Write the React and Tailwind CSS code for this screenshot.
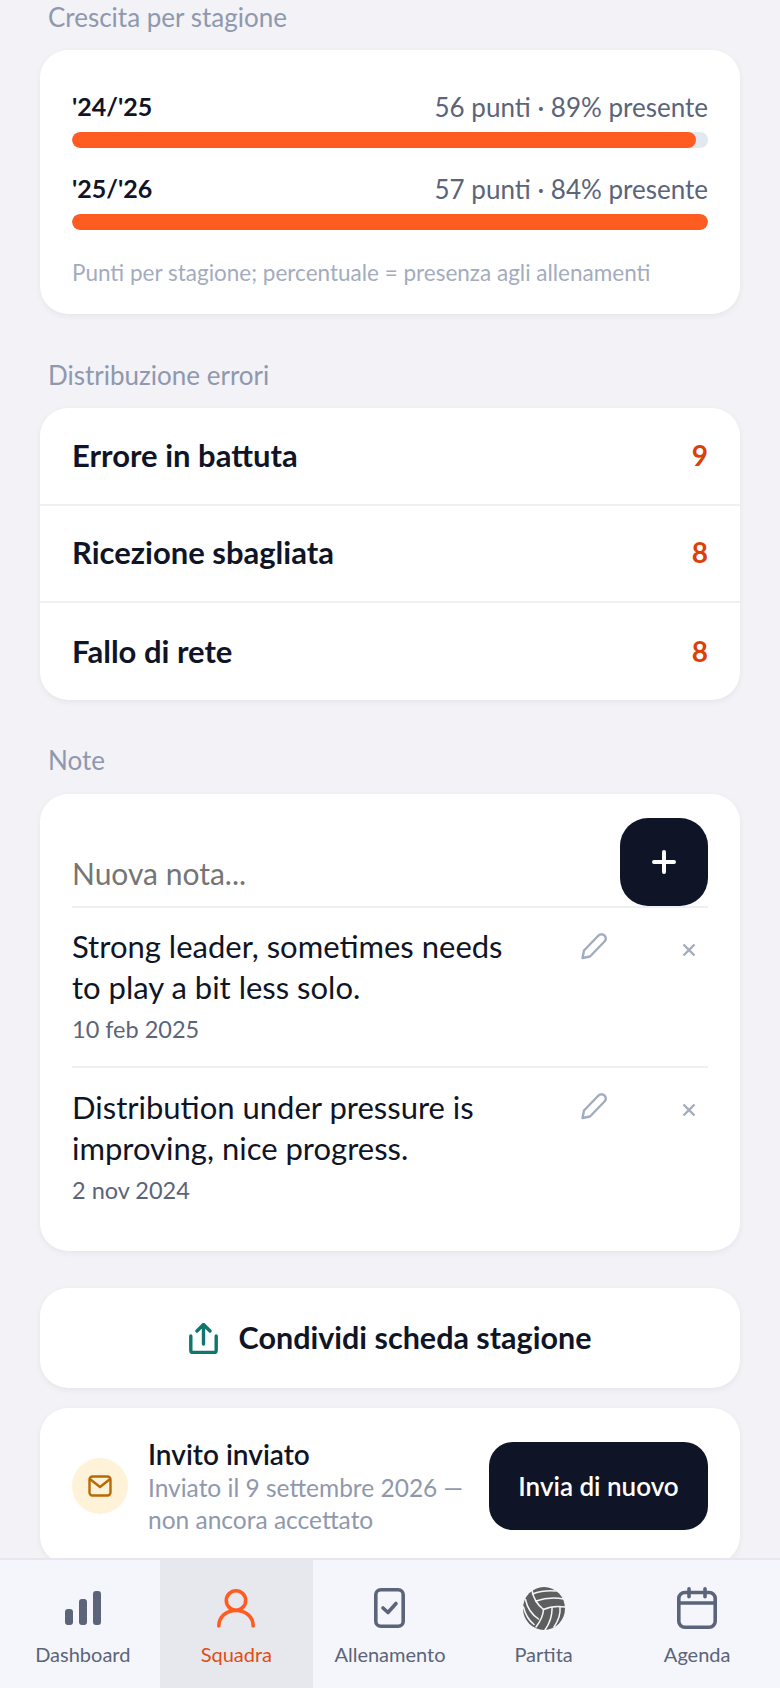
const font = { fontFamily: '"Lato", "Noto Sans", sans-serif' };

function Label({ children, cls }) {
  return <div className={`pl-2 pb-[2px] text-[26px] leading-[26px] text-[#8f98ad] ${cls}`}>{children}</div>;
}

function Season({ name, info, width }) {
  return (
    <div>
      <div className="flex items-center justify-between h-[32px]">
        <span className="text-[25px] font-bold text-[#0f1526]">{name}</span>
        <span className="text-[26px] text-[#5b6479]">{info}</span>
      </div>
      <div className="mt-[9px] h-[16px] rounded-full bg-[#e2e8f0] overflow-hidden">
        <div className={`h-full rounded-full bg-[#ff5c22] ${width}`} />
      </div>
    </div>
  );
}

function ErrorRow({ name, n, last }) {
  return (
    <div className={`h-[97.5px] px-8 pb-[2px] flex items-center justify-between ${last ? "" : "border-b-2 border-[#eef0f4]"}`}>
      <span className="text-[31px] font-bold text-[#0f1526]">{name}</span>
      <span className="text-[28px] font-bold text-[#dc3f08]">{n}</span>
    </div>
  );
}

function Pencil() {
  return (
    <svg width="28" height="28" viewBox="0 0 28 28" fill="none" stroke="#a3acbe" strokeWidth="2.4" strokeLinecap="round" strokeLinejoin="round">
      <path d="M2.5 26 L4 18.5 L18.5 3.5 Q21.5 0.8 24.5 3.5 Q27 6.3 24.5 9.5 L10 24.5 Z" />
    </svg>
  );
}

function Note({ lines, date, border }) {
  return (
    <div className={`flex items-start justify-between ${border ? "border-t-2 border-[#eef0f4]" : ""}`}>
      <div className={`pb-[21px] ${border ? "pt-[19px]" : "pt-[18px]"}`}>
        <div className="text-[31px] leading-[41px] text-[#0f1526] whitespace-nowrap">
          {lines[0]}<br />{lines[1]}
        </div>
        <div className="mt-[5px] text-[23.5px] leading-[32px] text-[#5b6479]">{date}</div>
      </div>
      <div className="flex items-start pt-[24px]">
        <Pencil />
        <svg className="mt-[11px] ml-[74px] mr-[12px]" width="14" height="14" viewBox="0 0 14 14" fill="none" stroke="#a3acbe" strokeWidth="2.4">
          <path d="M1.5 1.5l11 11M12.5 1.5l-11 11" />
        </svg>
      </div>
    </div>
  );
}

function NavItem({ label, active, children }) {
  return (
    <div className={`flex-1 flex flex-col items-center pt-[26px] ${active ? "bg-[#e7e8ed] text-[#e04d14]" : "text-[#5b6479]"}`}>
      <div className="h-[44px] flex items-center justify-center">{children}</div>
      <div className="mt-[11px] text-[20px] leading-[26px]">{label}</div>
    </div>
  );
}

function Volleyball() {
  return (
    <svg width="42" height="43" viewBox="0 0 42 43">
      <ellipse cx="21" cy="21.5" rx="21" ry="21.5" fill="#5d5f5f" />
      <g fill="none" stroke="#f5f6fb" strokeWidth="1.5" strokeLinecap="round">
        <path d="M9 3.5Q11 15 20.5 22.5" />
        <path d="M9.5 7Q20 3 33 4" />
        <path d="M13 14Q26 9.5 41 12" />
        <path d="M20.5 22.5Q30 18 42 20" />
        <path d="M20.5 22.5Q20 31 13 40" />
        <path d="M29 20.5Q29.500 32 22 43" />
        <path d="M37 19.500Q38 30 31 40" />
        <path d="M2.500 12.500Q5 25 15.500 32" />
        <path d="M0.500 20Q3 31 11 37.500" />
      </g>
    </svg>
  );
}

export default function App() {
  return (
    <div style={font} className="w-[780px] h-[1688px] flex flex-col overflow-hidden bg-[#f2f2f7]">
      <main className="h-[1558px] shrink-0 overflow-hidden px-10 pt-[4px] flex flex-col">
        <Label>Crescita per stagione</Label>
        <section className="mt-[18px] h-[264px] shrink-0 rounded-[28px] bg-white shadow-[0_2px_6px_rgba(15,21,38,0.06)] px-8 pt-[41px]">
          <div className="flex flex-col gap-[25px]">
            <Season name="'24/'25" info="56 punti · 89% presente" width="w-[98.1%]" />
            <Season name="'25/'26" info="57 punti · 84% presente" width="w-full" />
          </div>
          <div className="mt-[28px] text-[22.5px] leading-[30px] text-[#a3acbe] whitespace-nowrap">Punti per stagione; percentuale = presenza agli allenamenti</div>
        </section>

        <Label cls="mt-[48px]">Distribuzione errori</Label>
        <section className="mt-[18px] h-[292px] shrink-0 rounded-[28px] bg-white shadow-[0_2px_6px_rgba(15,21,38,0.06)] overflow-hidden">
          <ErrorRow name="Errore in battuta" n="9" />
          <ErrorRow name="Ricezione sbagliata" n="8" />
          <ErrorRow name="Fallo di rete" n="8" last />
        </section>

        <Label cls="mt-[47px]">Note</Label>
        <section className="mt-[19px] h-[457px] shrink-0 rounded-[28px] bg-white shadow-[0_2px_6px_rgba(15,21,38,0.06)] px-8 pt-6">
          <div className="flex items-end justify-between border-b-2 border-[#eef0f4]">
            <span className="pb-[13px] text-[30px] leading-[40px] text-[#757575]">Nuova nota...</span>
            <div className="w-[88px] h-[88px] rounded-[28px] bg-[#0f1526] flex items-center justify-center text-white">
              <svg width="26" height="26" viewBox="0 0 26 26" fill="none" stroke="currentColor" strokeWidth="4" strokeLinecap="round"><path d="M13 3v20M3 13h20" /></svg>
            </div>
          </div>
          <Note lines={["Strong leader, sometimes needs", "to play a bit less solo."]} date="10 feb 2025" />
          <Note border lines={["Distribution under pressure is", "improving, nice progress."]} date="2 nov 2024" />
        </section>

        <section className="mt-[37px] h-[100px] shrink-0 rounded-[28px] bg-white shadow-[0_2px_6px_rgba(15,21,38,0.06)] flex items-center justify-center gap-[21px]">
          <svg width="29" height="31" viewBox="0 0 29 31" fill="none" stroke="#0f766e" strokeWidth="3.400" strokeLinecap="round" strokeLinejoin="round">
            <path d="M14.500 21V2M8 8l6.500-6.500L21 8" /><path d="M1.800 13v14.500a2 2 0 0 0 2 2h21.400a2 2 0 0 0 2-2V13" />
          </svg>
          <span className="text-[30.5px] font-bold text-[#0f1526]">Condividi scheda stagione</span>
        </section>

        <section className="mt-[20px] h-[156px] shrink-0 rounded-[28px] bg-white shadow-[0_2px_6px_rgba(15,21,38,0.06)] px-8 flex items-center">
          <div className="w-[56px] h-[56px] rounded-full bg-[#fef3d8] flex items-center justify-center shrink-0">
            <svg width="24" height="22" viewBox="0 0 24 22" fill="none" stroke="#b96a04" strokeWidth="2.400" strokeLinecap="round" strokeLinejoin="round">
              <rect x="1.500" y="1.500" width="21" height="19" rx="3" /><path d="M2.500 4.500l9.500 7.500 9.500-7.500" />
            </svg>
          </div>
          <div className="ml-[20px] shrink-0 whitespace-nowrap">
            <div className="text-[28px] leading-[36px] font-semibold text-[#0f1526]">Invito inviato</div>
            <div className="text-[24.5px] leading-[32px] text-[#8f98ad]">Inviato il 9 settembre 2026 —<br />non ancora accettato</div>
          </div>
          <div className="ml-auto w-[219px] h-[88px] rounded-[24px] bg-[#0f1526] flex items-center justify-center text-white text-[26px] font-semibold">Invia di nuovo</div>
        </section>
      </main>

      <nav className="h-[130px] shrink-0 border-t-2 border-[#e7e8ed] bg-[#f5f6fb] px-[6px] flex">
        <NavItem label="Dashboard">
          <svg width="36" height="34" viewBox="0 0 36 34" fill="#5b6479">
            <rect x="0" y="18" width="8" height="16" rx="3" /><rect x="14" y="8" width="8" height="26" rx="3" /><rect x="28" y="0" width="8" height="34" rx="3" />
          </svg>
        </NavItem>
        <NavItem label="Squadra" active>
          <svg width="38" height="39" viewBox="0 0 38 39" fill="none" stroke="#ff5c22" strokeWidth="3.600" strokeLinecap="round">
            <circle cx="19" cy="11.500" r="9.700" /><path d="M1.800 37C1.800 28 9 21.500 19 21.500S36.200 28 36.200 37" />
          </svg>
        </NavItem>
        <NavItem label="Allenamento">
          <svg width="31" height="40" viewBox="0 0 31 40" fill="none" stroke="#5b6479" strokeWidth="3.600" strokeLinecap="round" strokeLinejoin="round">
            <rect x="1.800" y="1.800" width="27.400" height="36.400" rx="5" /><path d="M9 20l5 4.500 8-9" />
          </svg>
        </NavItem>
        <NavItem label="Partita"><Volleyball /></NavItem>
        <NavItem label="Agenda">
          <svg width="40" height="42" viewBox="0 0 40 42" fill="none" stroke="#5b6479" strokeWidth="3.600" strokeLinecap="round" strokeLinejoin="round">
            <rect x="1.800" y="5.500" width="36.400" height="34.700" rx="6" /><path d="M12 1.800v8M28 1.800v8M1.800 16h36.400" />
          </svg>
        </NavItem>
      </nav>
    </div>
  );
}
